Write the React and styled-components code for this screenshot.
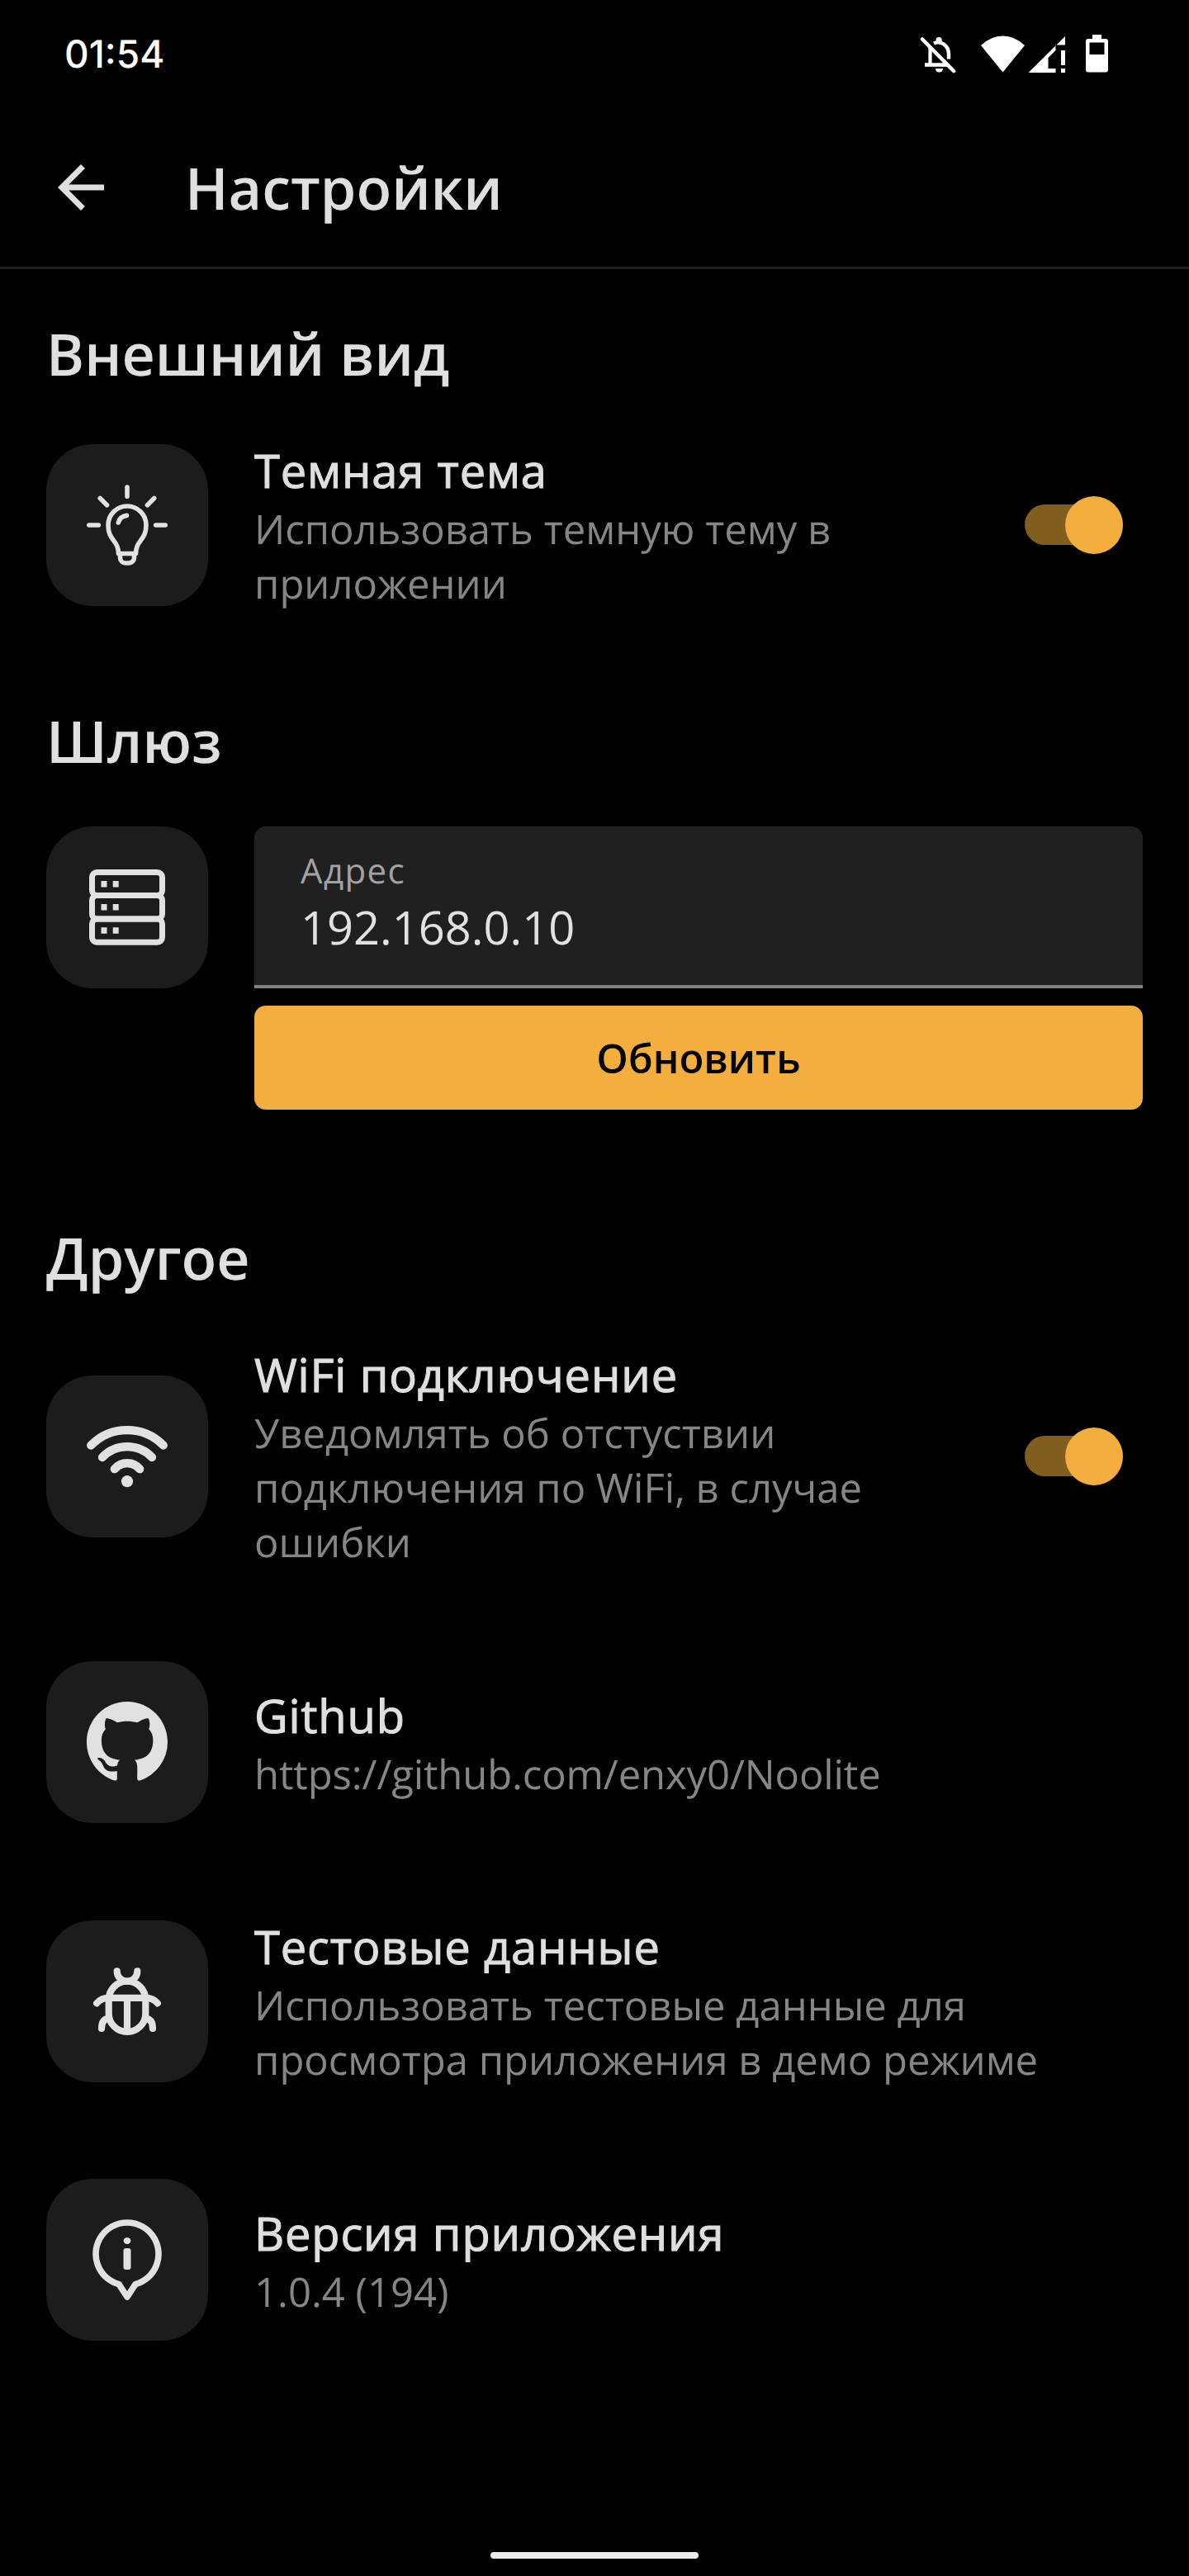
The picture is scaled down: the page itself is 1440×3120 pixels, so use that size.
import React from 'react';
import styled, { createGlobalStyle } from 'styled-components';

const GlobalStyle = createGlobalStyle`
  * { box-sizing: border-box; }
  html, body { margin: 0; background: #000; }
`;

const Screen = styled.div`
  width: 1440px;
  height: 3120px;
  display: flex;
  flex-direction: column;
  background: #000;
  color: #dfdfdf;
  font-family: 'Open Sans', 'Noto Sans', sans-serif;
  text-rendering: geometricPrecision;
  overflow: hidden;
`;

const StatusBar = styled.header`
  height: 130px;
  padding: 0 94px 0 78px;
  display: flex;
  align-items: center;
  justify-content: space-between;
`;

const Clock = styled.span`
  padding-top: 1px;
  font-family: 'Inter', sans-serif;
  font-weight: 500;
  font-size: 46px;
  line-height: 60px;
  color: #fff;
`;

const StatusIcons = styled.div`
  display: flex;
  svg { display: block; }
`;

const AppBar = styled.div`
  height: 196px;
  padding: 0 56px;
  display: flex;
  align-items: center;
  border-bottom: 3px solid #1c1c1c;
  svg { display: block; }
`;

const AppTitle = styled.h1`
  margin: 2px 0 0 84px;
  font-size: 70px;
  font-weight: 600;
  line-height: 95px;
`;

const Section = styled.section`
  padding: 0 56px;
  margin-top: ${(p) => p.$top}px;
`;

const SectionTitle = styled.h2`
  margin: 0;
  font-size: 70px;
  font-weight: 600;
  line-height: 95px;
`;

const Row = styled.div`
  display: flex;
  align-items: ${(p) => p.$align || 'center'};
  padding: 56px 0 ${(p) => p.$bottom || 56}px;
`;

const Tile = styled.div`
  flex: none;
  width: 196px;
  height: 196px;
  margin-right: 56px;
  border-radius: 56px;
  background: #1c1c1c;
  color: #e1e1e1;
  display: flex;
  align-items: center;
  justify-content: center;
  svg { display: block; }
`;

const RowText = styled.div`
  flex: 1;
  min-width: 0;
  margin: 1px 0 -1px;
`;

const RowTitle = styled.div`
  font-size: 56px;
  line-height: 75px;
  letter-spacing: 0.85px;
  -webkit-text-stroke: 1.1px currentColor;
`;

const RowDescription = styled.div`
  font-size: 49px;
  line-height: 66px;
  letter-spacing: ${(p) => p.$tracking || 0}px;
  color: #868686;
`;

const Switch = styled.div`
  flex: none;
  width: 119px;
  height: 70px;
  margin: 0 24px 0 96px;
  display: flex;
  align-items: center;
`;

const Track = styled.div`
  width: 119px;
  height: 49px;
  border-radius: 25px;
  background: #815e1d;
  display: flex;
  align-items: center;
  justify-content: flex-end;
`;

const Thumb = styled.div`
  flex: none;
  width: 70px;
  height: 70px;
  border-radius: 50%;
  background: #f3ae3d;
`;

const GatewayForm = styled.div`
  flex: 1;
  display: flex;
  flex-direction: column;
  gap: 21px;
`;

const Field = styled.label`
  height: 196px;
  padding: 25px 56px 0;
  border-radius: 14px 14px 0 0;
  border-bottom: 4px solid #808080;
  background: #202020;
  display: flex;
  flex-direction: column;
`;

const FieldLabel = styled.span`
  font-size: 42px;
  line-height: 57px;
  letter-spacing: 1.4px;
  color: #a2a2a2;
`;

const FieldValue = styled.span`
  margin-top: 2px;
  font-size: 56px;
  line-height: 76px;
  color: #e1e1e1;
`;

const UpdateButton = styled.button`
  height: 126px;
  border: 0;
  border-radius: 14px;
  background: #f3ae3d;
  color: #000;
  font: 600 49px/66px 'Open Sans', 'Noto Sans', sans-serif;
`;

const GestureArea = styled.footer`
  margin-top: auto;
  height: 29px;
  display: flex;
  justify-content: center;
  align-items: flex-start;
`;

const GestureHandle = styled.div`
  width: 252px;
  height: 8px;
  border-radius: 4px;
  background: #ebebeb;
`;

const BackArrow = () => (
  <svg width="84" height="84" viewBox="0 0 24 24" fill="currentColor">
    <path d="M20 11H7.83l5.59-5.59L12 4l-8 8 8 8 1.41-1.41L7.83 13H20v-2z" />
  </svg>
);

const StatusGlyphs = () => (
  <svg width="266" height="60" viewBox="1080 35 266 60" fill="#fff">
    <g fill="none" stroke="#fff">
      <path d="M1117 47.500 1155 86" strokeWidth="4.600" strokeLinecap="round" />
      <path d="M1126.500 58v20" strokeWidth="4.200" />
      <path d="M1120 78.500h28" strokeWidth="4.600" />
      <path d="M1131 52.500q6-3 12 1q6 4 6 12v6" strokeWidth="4.400" />
    </g>
    <path d="M1133.500 51v-2.500a3.600 3.600 0 0 1 7.200 0v3z" />
    <path d="M1133 83h9a4.500 4.500 0 0 1-9 0z" />
    <path d="M1188 55Q1200 43.500 1214.500 43.500T1241 55L1214.500 87.500z" />
    <path d="M1290 44v10.500h-11.500V61l-9 9v13h9v5H1245.500z" />
    <path d="M1285 61h5v18h-5zM1285 83h5v5h-5z" />
    <path fillRule="evenodd" d="M1323 42h11v5h5a3 3 0 0 1 3 3v34.500a3 3 0 0 1-3 3h-21a3 3 0 0 1-3-3V50a3 3 0 0 1 3-3h5zM1319.500 51.500v14.500h18V51.500z" />
  </svg>
);

const BulbIcon = () => (
  <svg width="98" height="98" viewBox="0 0 98 98" fill="none" stroke="currentColor" strokeWidth="5.600" strokeLinecap="round" strokeLinejoin="round">
    <path d="M49 3v11.300M2.800 49h11.500M83.700 49h11.500M16.300 16.500l8.200 8.300M81.700 16.500l-8.200 8.300" />
    <path d="M38.500 83.500C38.500 67 26 68 26 49a23 23 0 0 1 46 0c0 19-12.500 18-12.500 34.500z" />
    <path d="M40.500 84v4.500a6.500 6.500 0 0 0 6.500 6.500h4a6.500 6.500 0 0 0 6.500-6.500V84" />
    <path d="M38.300 46q2-7.500 10.200-8.600" />
  </svg>
);

const ServerIcon = () => (
  <svg width="98" height="98" viewBox="0 0 98 98" fill="none" stroke="currentColor" strokeWidth="7">
    <rect x="6.500" y="6.500" width="85" height="28" rx="6" />
    <rect x="6.500" y="34.500" width="85" height="28.500" rx="6" />
    <rect x="6.500" y="63" width="85" height="28.300" rx="6" />
    <path d="M17.500 20.800h7M31.700 20.800h7M17.500 48.800h7M31.700 48.800h7M17.500 77h7M31.700 77h7" strokeWidth="7.500" />
  </svg>
);

const WifiIcon = () => (
  <svg width="98" height="98" viewBox="0 0 98 98" fill="none" stroke="currentColor" strokeWidth="10.300" strokeLinecap="round">
    <path d="M5.200 35.500a61.300 61.300 0 0 1 87.600 0M19 50a41.300 41.300 0 0 1 60 0M33.800 64.200a19.800 19.800 0 0 1 30.400 0" />
    <circle cx="49" cy="79.200" r="7.100" fill="currentColor" stroke="none" />
  </svg>
);

const GithubIcon = () => (
  <svg width="98" height="98" viewBox="0 0 16 16" fill="currentColor">
    <path d="M8 0C3.580 0 0 3.580 0 8c0 3.540 2.290 6.530 5.470 7.590.4.070.55-.17.55-.38 0-.19-.01-.82-.01-1.490-2.010.37-2.530-.49-2.690-.94-.09-.23-.48-.94-.82-1.130-.28-.15-.68-.52-.01-.53.63-.01 1.080.58 1.230.82.72 1.210 1.870.87 2.330.66.070-.52.28-.87.51-1.070-1.780-.2-3.640-.89-3.640-3.950 0-.87.31-1.590.82-2.150-.08-.2-.36-1.020.08-2.120 0 0 .67-.21 2.200.82.64-.18 1.320-.27 2-.27s1.360.09 2 .27c1.530-1.040 2.200-.82 2.200-.82.44 1.100.16 1.920.08 2.120.51.56.82 1.270.82 2.150 0 3.070-1.870 3.750-3.650 3.950.29.25.54.73.54 1.480 0 1.070-.01 1.930-.01 2.200 0 .21.15.46.55.38A8.010 8.010 0 0 0 16 8c0-4.420-3.580-8-8-8z" />
  </svg>
);

const BugIcon = () => (
  <svg width="98" height="98" viewBox="0 0 98 98" fill="none" stroke="currentColor" strokeWidth="8.200" strokeLinecap="round">
    <path d="M26.700 47v16.700a22.300 22.300 0 0 0 44.600 0V47a22.300 22.300 0 0 0-44.600 0z" />
    <path d="M26.700 44.800h44.600M49 44.800v40" strokeLinecap="butt" />
    <path d="M36.700 12.400c0 7 5.500 12.100 12.300 12.100s12.300-5.100 12.300-12.100" />
    <path d="M12.200 51.300q5-6.500 14.500-6.500M85.800 51.300q-5-6.500-14.500-6.500M18 82q0-11.500 8.700-12.500M80 82q0-11.500-8.700-12.500" />
  </svg>
);

const InfoIcon = () => (
  <svg width="98" height="98" viewBox="0 0 98 98" fill="none" stroke="currentColor" strokeWidth="7.600" strokeLinecap="round" strokeLinejoin="round">
    <path d="M49 94 39 78.660A38 38 0 1 1 59 78.660z" />
    <rect x="44.500" y="35" width="9" height="26" rx="3" fill="currentColor" stroke="none" />
    <ellipse cx="49" cy="26" rx="4.400" ry="4" fill="currentColor" stroke="none" />
  </svg>
);

const Toggle = () => (
  <Switch>
    <Track>
      <Thumb />
    </Track>
  </Switch>
);

const SettingRow = ({ icon, title, description, tracking, toggle }) => (
  <Row>
    <Tile>{icon}</Tile>
    <RowText>
      <RowTitle>{title}</RowTitle>
      <RowDescription $tracking={tracking}>{description}</RowDescription>
    </RowText>
    {toggle && <Toggle />}
  </Row>
);

export default function App() {
  return (
    <Screen>
      <GlobalStyle />
      <StatusBar>
        <Clock>01:54</Clock>
        <StatusIcons>
          <StatusGlyphs />
        </StatusIcons>
      </StatusBar>
      <AppBar>
        <BackArrow />
        <AppTitle>Настройки</AppTitle>
      </AppBar>
      <Section $top={55}>
        <SectionTitle>Внешний вид</SectionTitle>
        <SettingRow icon={<BulbIcon />} title="Темная тема" description="Использовать темную тему в приложении" toggle />
      </Section>
      <Section $top={55}>
        <SectionTitle>Шлюз</SectionTitle>
        <Row $align="flex-start">
          <Tile><ServerIcon /></Tile>
          <GatewayForm>
            <Field>
              <FieldLabel>Адрес</FieldLabel>
              <FieldValue>192.168.0.10</FieldValue>
            </Field>
            <UpdateButton>Обновить</UpdateButton>
          </GatewayForm>
        </Row>
      </Section>
      <Section $top={76}>
        <SectionTitle>Другое</SectionTitle>
        <SettingRow icon={<WifiIcon />} title="WiFi подключение" description="Уведомлять об отстуствии подключения по WiFi, в случае ошибки" toggle />
        <SettingRow icon={<GithubIcon />} title="Github" description="https://github.com/enxy0/Noolite" tracking={-0.11} />
        <SettingRow icon={<BugIcon />} title="Тестовые данные" description="Использовать тестовые данные для просмотра приложения в демо режиме" />
        <SettingRow icon={<InfoIcon />} title="Версия приложения" description="1.0.4 (194)" />
      </Section>
      <GestureArea>
        <GestureHandle />
      </GestureArea>
    </Screen>
  );
}
